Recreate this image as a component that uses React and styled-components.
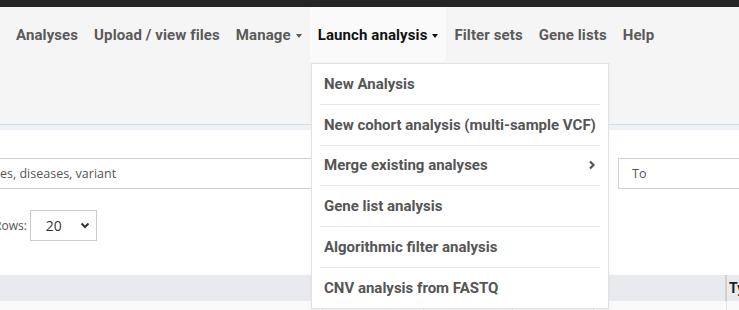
import styled, { createGlobalStyle } from "styled-components";

const GlobalStyle = createGlobalStyle`
    html, body {
        margin: 0;
        padding: 0;
        background: #fff;
        overflow: hidden;
    }
    body {
        width: 739px;
        height: 310px;
        font-family: "Open Sans", "Liberation Sans", sans-serif;
    }
`

const Page = styled.div`
    position: relative;
    width: 739px;
    height: 310px;
    overflow: hidden;
`

const TopStrip = styled.div`
    height: 7px;
    background: #252525;
`

const Header = styled.div`
    height: 117px;
    background: #f5f5f5;
    border-bottom: 1px solid #dcdcdc;
`

const Nav = styled.ul`
    display: flex;
    margin: 0;
    padding: 0 0 0 8px;
    list-style: none;
    height: 55px;
`

const NavItem = styled.li`
    position: relative;
    display: flex;
    align-items: center;
    gap: 5px;
    padding: 0 8px;
    font-family: Roboto, "Liberation Sans", sans-serif;
    font-weight: 700;
    font-size: 15px;
    letter-spacing: 0.1px;
    color: ${(p) => (p.$active ? "#111" : "#5a5a5a")};
    background: ${(p) => (p.$active ? "#fafafa" : "transparent")};
    white-space: nowrap;
`

const Caret = styled.span`
    width: 0;
    height: 0;
    margin-top: 2px;
    border-left: 3.5px solid transparent;
    border-right: 3.5px solid transparent;
    border-top: 4px solid currentColor;
`

const Strip = styled.div`
    height: 5px;
    background: #eef3f7;
`

const Content = styled.div`
    padding-top: 28px;
`

const SearchRow = styled.div`
    display: flex;
    align-items: center;
    gap: 11px;
`

const Input = styled.div`
    box-sizing: border-box;
    height: 31px;
    display: flex;
    align-items: center;
    border: 1px solid #ccd2d8;
    font-size: 12.5px;
    color: ${(p) => p.$color || "#555"};
    padding-left: ${(p) => p.$pad || "12px"};
    width: ${(p) => p.$width};
    margin-left: ${(p) => p.$offset || "0"};
    flex-shrink: 0;
`

const RowsLine = styled.div`
    display: flex;
    align-items: center;
    gap: 3px;
    margin-top: 21px;
    margin-left: -6px;
    font-size: 12px;
    color: #555;
`

const Select = styled.div`
    box-sizing: border-box;
    width: 67px;
    height: 31px;
    border: 1px solid #ccc;
    display: flex;
    align-items: center;
    justify-content: space-between;
    padding: 0 6px 0 15px;
    font-size: 14px;
    color: #333;
`

const TableHead = styled.div`
    margin-top: 34px;
    height: 26px;
    background: #e9eaed;
    display: flex;
    justify-content: flex-end;
`

const HeadCell = styled.div`
    width: 10px;
    border-left: 2px solid #d0d0d3;
    padding-left: 2px;
    font-family: Roboto, "Liberation Sans", sans-serif;
    font-weight: 700;
    font-size: 14px;
    line-height: 26px;
    color: #222;
    overflow: hidden;
    white-space: nowrap;
`

const TableRow = styled.div`
    height: 9px;
    background: #fafafa;
    display: grid;
    grid-template-columns: 323px 101px 89px 81px 133px 1fr;
`

const Cell = styled.div`
    border-right: 1px solid #e3e3e3;
`

const Dropdown = styled.ul`
    position: absolute;
    left: 311px;
    top: 63px;
    width: 298px;
    box-sizing: border-box;
    margin: 0;
    padding: 0;
    list-style: none;
    background: #fff;
    border: 1px solid #e2e2e2;
    box-shadow: 0 2px 4px rgba(0, 0, 0, 0.04);
`

const MenuItem = styled.li`
    height: 39.8px;
    display: flex;
    align-items: center;
    justify-content: space-between;
    padding: 0 12px 0 12px;
    font-family: Roboto, "Liberation Sans", sans-serif;
    font-weight: 700;
    font-size: 15px;
    color: #555;
    white-space: nowrap;
`

const Divider = styled.li`
    height: 1px;
    margin: 0 8px;
    background: #e8e8e8;
`

const menu = [
    "New Analysis",
    "New cohort analysis (multi-sample VCF)",
    "Merge existing analyses",
    "Gene list analysis",
    "Algorithmic filter analysis",
    "CNV analysis from FASTQ",
]

function App() {
    return (
        <Page>
            <GlobalStyle />
            <TopStrip />
            <Header>
                <Nav>
                    <NavItem>Analyses</NavItem>
                    <NavItem>Upload / view files</NavItem>
                    <NavItem>Manage <Caret /></NavItem>
                    <NavItem $active>Launch analysis <Caret /></NavItem>
                    <NavItem>Filter sets</NavItem>
                    <NavItem>Gene lists</NavItem>
                    <NavItem>Help</NavItem>
                </Nav>
            </Header>
            <Strip />
            <Content>
                <SearchRow>
                    <Input $width="617px" $offset="-10px" $pad="9px">es, diseases, variant</Input>
                    <Input $width="140px" $pad="13px">To</Input>
                </SearchRow>
                <RowsLine>
                    Rows:
                    <Select>
                        20
                        <svg width="10" height="7" viewBox="0 0 10 7">
                            <polyline points="1.5,1.5 5,5 8.5,1.5" fill="none" stroke="#333" strokeWidth="2" />
                        </svg>
                    </Select>
                </RowsLine>
                <TableHead>
                    <HeadCell>Ty</HeadCell>
                </TableHead>
                <TableRow>
                    <Cell /><Cell /><Cell /><Cell /><Cell /><div />
                </TableRow>
            </Content>
            <Dropdown>
                {menu.map((x, i) => (
                    <>
                        {i > 0 && <Divider key={"d" + i} />}
                        <MenuItem key={i}>
                            {x}
                            {i === 2 && (
                                <svg width="8" height="10" viewBox="0 0 8 10">
                                    <polyline points="2,1.5 5.5,5 2,8.5" fill="none" stroke="#555" strokeWidth="2.2" />
                                </svg>
                            )}
                        </MenuItem>
                    </>
                ))}
            </Dropdown>
        </Page>
    );
}

export default App;
